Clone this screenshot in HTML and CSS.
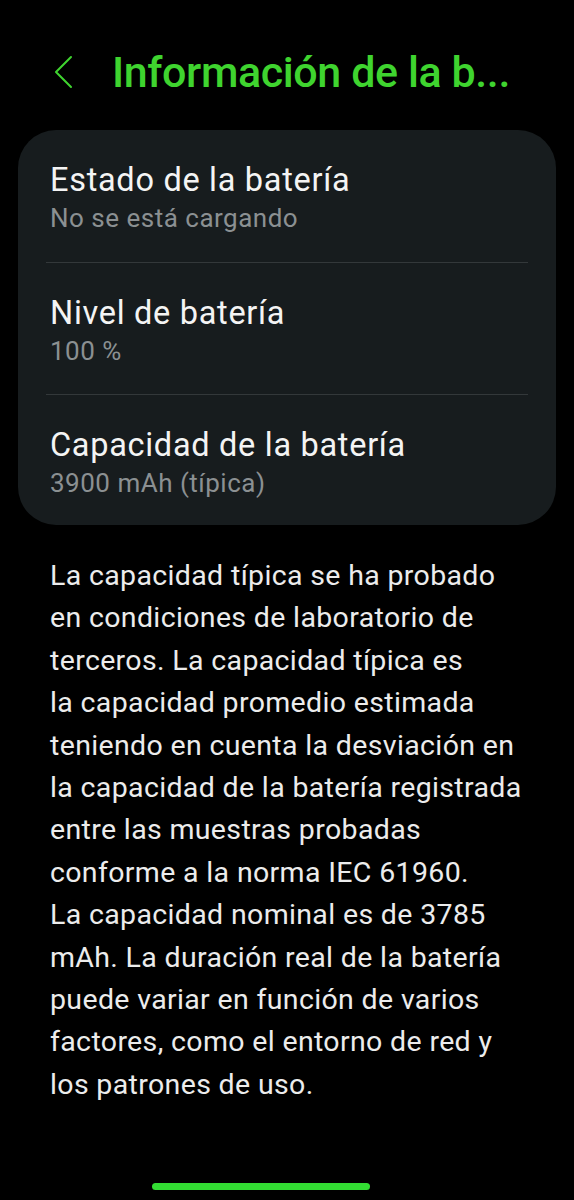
FILE: index.html
```html
<!DOCTYPE html>
<html lang="es">
<head>
  <meta charset="UTF-8">
  <title>Información de la batería</title>
  <link rel="stylesheet" href="styles.css">
</head>
<body>

<div class="screen">
  <div class="header">
    <svg class="back" width="20" height="34" viewBox="0 0 20 34">
      <path d="M17 2 L2 17 L17 32" fill="none" stroke="#3fd42f" stroke-width="2" stroke-linecap="round" stroke-linejoin="round"/>
    </svg>
    <h1 class="title">Información de la b...</h1>
  </div>

  <div class="card">
    <div class="row">
      <div class="row-title">Estado de la batería</div>
      <div class="row-sub">No se está cargando</div>
    </div>
    <div class="divider"></div>
    <div class="row">
      <div class="row-title">Nivel de batería</div>
      <div class="row-sub">100 %</div>
    </div>
    <div class="divider"></div>
    <div class="row">
      <div class="row-title">Capacidad de la batería</div>
      <div class="row-sub">3900 mAh (típica)</div>
    </div>
  </div>

  <p class="note">La capacidad típica se ha probado<br>en condiciones de laboratorio de<br>terceros. La capacidad típica es<br>la capacidad promedio estimada<br>teniendo en cuenta la desviación en<br>la capacidad de la batería registrada<br>entre las muestras probadas<br>conforme a la norma IEC 61960.<br>La capacidad nominal es de 3785<br>mAh. La duración real de la batería<br>puede variar en función de varios<br>factores, como el entorno de red y<br>los patrones de uso.</p>

  <div class="navbar"></div>
</div>

</body>
</html>
```

FILE: styles.css
```css
* {
  box-sizing: border-box;
}
body {
  margin: 0;
  background: #000;
  font-family: Roboto, "Noto Sans", sans-serif;
  color: #f2f2f2;
}
.screen {
  width: 574px;
  height: 1200px;
  display: flex;
  flex-direction: column;
  overflow: hidden;
}
.header {
  display: flex;
  align-items: center;
  height: 130px;
  padding: 14px 0 0 54px;
  gap: 38px;
}
.back {
  flex-shrink: 0;
}
.title {
  margin: 0;
  font-size: 43px;
  font-weight: 500;
  color: #3fd42f;
  letter-spacing: -0.4px;
  white-space: nowrap;
}
.card {
  margin: 0 18px;
  background: #171c1e;
  border-radius: 38px;
  padding: 0;
}
.row {
  padding: 30px 32px 0;
  height: 131px;
}
.row:first-child {
  height: 132px;
}
.row:last-child {
  height: 130px;
}
.divider {
  height: 1px;
  margin: 0 28px;
  background: #33383a;
}
.row-title {
  font-size: 32.5px;
  line-height: 40px;
  letter-spacing: 0.7px;
  color: #f4f4f4;
}
.row-sub {
  font-size: 26px;
  line-height: 36px;
  letter-spacing: 0.5px;
  color: #8b9092;
}
.note {
  margin: 30px 0 0 50px;
  font-size: 28.5px;
  line-height: 42.4px;
  letter-spacing: 0.35px;
  color: #ececec;
}
.navbar {
  margin: auto 0 10px 152px;
  width: 218px;
  height: 7px;
  border-radius: 4px;
  background: #33dd33;
}
```
